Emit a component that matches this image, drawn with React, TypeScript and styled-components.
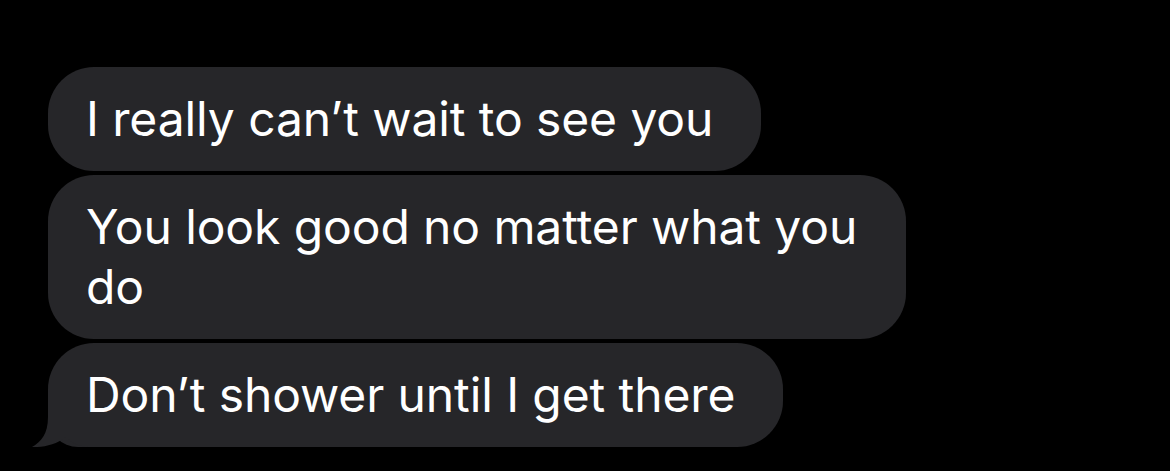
import React from "react";
import styled, { createGlobalStyle } from "styled-components";

const Global = createGlobalStyle`
  html, body { margin: 0; padding: 0; background: #000; }
  body { font-family: Inter, "Noto Sans", sans-serif; -webkit-font-smoothing: antialiased; }
`;

const Thread = styled.div`
  display: flex;
  flex-direction: column;
  align-items: flex-start;
  gap: 4px;
  padding: 67px 0 0 48px;
  height: 471px;
  box-sizing: border-box;
  background: #000;
`;

const Bubble = styled.div<{ $tail?: boolean }>`
  position: relative;
  box-sizing: border-box;
  max-width: 858px;
  padding: 22px 48px 22px 38px;
  background: #262629;
  color: #fff;
  font-size: 48px;
  line-height: 60px;
  letter-spacing: -0.1px;
  border-radius: 46px;
  ${(p) => (p.$tail ? "border-bottom-left-radius: 30px;" : "")}
`;

const Tail = styled.svg`
  position: absolute;
  left: -16px;
  bottom: 0;
  width: 56px;
  height: 50px;
  display: block;
`;

const TailShape = () => (
  <Tail viewBox="0 0 56 50" aria-hidden>
    <path
      d="M16 0 L16 20 C16 37 9 45 0 50 C12 50.5 24 47.5 34 40 C40 46 46 49 56 50 L56 0 Z"
      fill="#262629"
    />
  </Tail>
);

const messages = [
  { text: "I really can’t wait to see you" },
  { text: "You look good no matter what you do" },
  { text: "Don’t shower until I get there", tail: true },
];

export default function App() {
  return (
    <>
      <Global />
      <Thread>
        {messages.map((m, i) => (
          <Bubble key={i} $tail={m.tail}>
            {m.tail && <TailShape />}
            {m.text}
          </Bubble>
        ))}
      </Thread>
    </>
  );
}
